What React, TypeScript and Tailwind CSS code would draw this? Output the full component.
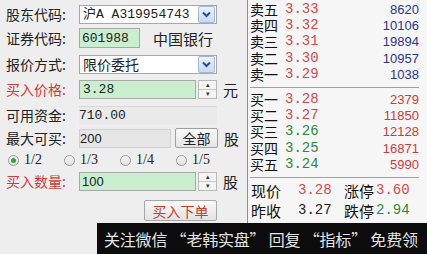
import React from 'react';

const cn = '"Noto Sans CJK SC", "Noto Sans", sans-serif';
const mono = '"Liberation Mono", "Noto Sans CJK SC", monospace';

const Chevron = () => (
  <div className="w-[17px] h-[17px] rounded-[2px] border border-[#9fb8d8] bg-gradient-to-b from-[#eaf2fc] to-[#c6daf2] flex items-center justify-center">
    <svg width="9" height="7" viewBox="0 0 9 7">
      <path d="M1 1.5 L4.5 5 L8 1.5" stroke="#2c4a8c" strokeWidth="2" fill="none" />
    </svg>
  </div>
);

const Spinner = () => (
  <div className="w-[19px] h-[19px] ml-[2px] flex flex-col border border-[#b8b8b8] bg-[#f4f4f4]">
    <div className="flex-1 flex items-center justify-center border-b border-[#c8c8c8] text-[7px] leading-none text-[#333]">▴</div>
    <div className="flex-1 flex items-center justify-center text-[7px] leading-none text-[#333]">▾</div>
  </div>
);

const Label = ({ text, red }: { text: string; red?: boolean }) => (
  <div className={`w-[73px] pl-[6px] text-[14px] leading-none whitespace-nowrap ${red ? 'text-[#d03a3a]' : 'text-[#222]'}`}>
    {text}
  </div>
);

const Radio = ({ label, on }: { label: string; on?: boolean }) => (
  <div className="flex items-center gap-[5px] w-[56px]">
    <div className="w-[11px] h-[11px] rounded-full border border-[#9a9a9a] bg-gradient-to-b from-[#f4f4f4] to-[#e2e2e2] flex items-center justify-center">
      {on && <div className="w-[5px] h-[5px] rounded-full bg-[#3aa13a]" />}
    </div>
    <span className="text-[14px] leading-none text-[#222]" style={{ fontFamily: '"Liberation Serif", serif' }}>{label}</span>
  </div>
);

const sells = [
  ['卖五', '3.33', '8620'],
  ['卖四', '3.32', '10106'],
  ['卖三', '3.31', '19894'],
  ['卖二', '3.30', '10957'],
  ['卖一', '3.29', '1038'],
];
const buys = [
  ['买一', '3.28', '2379', 'r'],
  ['买二', '3.27', '11850', 'r'],
  ['买三', '3.26', '12128', 'g'],
  ['买四', '3.25', '16871', 'g'],
  ['买五', '3.24', '5990', 'g'],
];

export default function App() {
  return (
    <div className="relative w-[427px] h-[254px] overflow-hidden bg-[#eeeeee] flex" style={{ fontFamily: cn }}>
      {/* left form */}
      <div className="w-[247px] shrink-0 flex flex-col pt-[4px]">
        <div className="flex items-center h-[20px]">
          <Label text="股东代码:" />
          <div className="w-[138px] h-[19px] ml-[6px] bg-white border border-[#a8a8a8] flex items-center justify-between pl-[3px] pr-[1px]">
            <span className="text-[13px] leading-none text-[#222]" style={{ fontFamily: mono }}>沪A A319954743</span>
            <Chevron />
          </div>
        </div>
        <div className="flex items-center h-[20px] mt-[4px]">
          <Label text="证券代码:" />
          <div className="w-[61px] h-[20px] ml-[6px] bg-[#c9efcf] border border-[#a8a8a8] flex items-center pl-[2px]">
            <span className="text-[13px] leading-none text-[#222]" style={{ fontFamily: mono }}>601988</span>
          </div>
          <span className="ml-[13px] text-[15px] leading-none text-[#222]">中国银行</span>
        </div>
        <div className="flex items-center h-[20px] mt-[6px]">
          <Label text="报价方式:" />
          <div className="w-[138px] h-[19px] ml-[6px] bg-white border border-[#a8a8a8] flex items-center justify-between pl-[3px] pr-[1px]">
            <span className="text-[14px] leading-none text-[#222]">限价委托</span>
            <Chevron />
          </div>
        </div>
        <div className="flex items-center h-[20px] mt-[5px]">
          <Label text="买入价格:" red />
          <div className="w-[117px] h-[19px] ml-[6px] bg-[#c9efcf] border border-[#a8a8a8] flex items-center pl-[3px]">
            <span className="text-[13px] leading-none text-[#222]" style={{ fontFamily: mono }}>3.28</span>
          </div>
          <Spinner />
          <span className="ml-[6px] text-[15px] leading-none text-[#222]">元</span>
        </div>
        <div className="flex items-center h-[20px] mt-[6px]">
          <Label text="可用资金:" />
          <div className="w-[138px] h-[19px] ml-[6px] bg-[#eaeaea] border-t border-[#d8d8d8] flex items-center">
            <span className="text-[13px] leading-none text-[#222]" style={{ fontFamily: mono }}>710.00</span>
          </div>
        </div>
        <div className="flex items-center h-[20px] mt-[3px]">
          <Label text="最大可买:" />
          <div className="w-[92px] h-[19px] ml-[6px] bg-[#e6e6e6] border border-[#d0d0d0] flex items-center">
            <span className="text-[13px] leading-none text-[#222]" style={{ fontFamily: '"Liberation Sans", sans-serif' }}>200</span>
          </div>
          <button className="w-[43px] h-[20px] ml-[4px] border border-[#a0a0a0] rounded-[2px] bg-gradient-to-b from-[#fbfbfb] to-[#e4e4e4] text-[14px] leading-none text-[#222]">全部</button>
          <span className="ml-[6px] text-[15px] leading-none text-[#222]">股</span>
        </div>
        <div className="flex items-center h-[18px] mt-[3px] pl-[8px]">
          <Radio label="1/2" on />
          <Radio label="1/3" />
          <Radio label="1/4" />
          <Radio label="1/5" />
        </div>
        <div className="flex items-center h-[20px] mt-[2px]">
          <Label text="买入数量:" red />
          <div className="w-[117px] h-[19px] ml-[6px] bg-[#c9efcf] border border-[#a8a8a8] flex items-center pl-[2px]">
            <span className="text-[13px] leading-none text-[#222]" style={{ fontFamily: '"Liberation Sans", sans-serif' }}>100</span>
          </div>
          <Spinner />
          <span className="ml-[6px] text-[15px] leading-none text-[#222]">股</span>
        </div>
        <div className="flex justify-end pr-[30px] mt-[9px]">
          <button className="w-[73px] h-[21px] border border-[#a8a8a8] rounded-[2px] bg-gradient-to-b from-[#fafafa] to-[#e2e2e2] text-[14px] leading-none text-[#cc3a2a]">买入下单</button>
        </div>
      </div>

      {/* right quote panel */}
      <div className="flex-1 flex flex-col border-l border-[#8e8e8e] bg-[#f6f6f6] pl-[2px] pr-[8px] pt-[1px]">
        <div className="flex flex-col">
          {sells.map(([n, p, v]) => (
            <div key={n} className="grid grid-cols-[35px_40px_1fr] items-center h-[16.4px]">
              <span className="text-[14px] leading-[15px] text-[#111]">{n}</span>
              <span className="text-[14px] leading-[15px] text-[#d44a4a]" style={{ fontFamily: mono }}>{p}</span>
              <span className="text-right text-[13px] leading-[15px] text-[#2a3592]" style={{ fontFamily: '"Liberation Sans", sans-serif' }}>{v}</span>
            </div>
          ))}
        </div>
        <div className="h-[1px] bg-[#a0a0a0] mt-[4px] mb-[3px]" />
        <div className="flex flex-col">
          {buys.map(([n, p, v, c]) => (
            <div key={n} className="grid grid-cols-[35px_40px_1fr] items-center h-[16.4px]">
              <span className="text-[14px] leading-[15px] text-[#111]">{n}</span>
              <span className={`text-[14px] leading-[15px] ${c === 'r' ? 'text-[#d44a4a]' : 'text-[#2f8a3a]'}`} style={{ fontFamily: mono }}>{p}</span>
              <span className="text-right text-[13px] leading-[15px] text-[#d03a3a]" style={{ fontFamily: '"Liberation Sans", sans-serif' }}>{v}</span>
            </div>
          ))}
        </div>
        <div className="h-[1px] bg-[#a0a0a0] mt-[4px] mb-[4px]" />
        <div className="flex flex-col gap-[3px] pl-[1px]">
          <div className="grid grid-cols-[47px_46px_32px_1fr] items-center h-[17px]">
            <span className="text-[15px] leading-none text-[#111]">现价</span>
            <span className="text-[14px] leading-none text-[#d44a4a]" style={{ fontFamily: mono }}>3.28</span>
            <span className="text-[15px] leading-none text-[#111]">涨停</span>
            <span className="text-[14px] leading-none text-[#d44a4a]" style={{ fontFamily: mono }}>3.60</span>
          </div>
          <div className="grid grid-cols-[47px_46px_32px_1fr] items-center h-[17px]">
            <span className="text-[15px] leading-none text-[#111]">昨收</span>
            <span className="text-[14px] leading-none text-[#222]" style={{ fontFamily: mono }}>3.27</span>
            <span className="text-[15px] leading-none text-[#111]">跌停</span>
            <span className="text-[14px] leading-none text-[#2f8a3a]" style={{ fontFamily: mono }}>2.94</span>
          </div>
        </div>
      </div>

      {/* watermark overlay */}
      <div className="absolute left-[97px] top-[223px] w-[330px] h-[31px] bg-[#0c0c0c] flex items-center pl-[7px]">
        <span className="text-[16px] leading-none text-[#e4e4e4] whitespace-nowrap tracking-[-0.2px]">关注微信 “老韩实盘” 回复 “指标” 免费领</span>
      </div>
    </div>
  );
}
